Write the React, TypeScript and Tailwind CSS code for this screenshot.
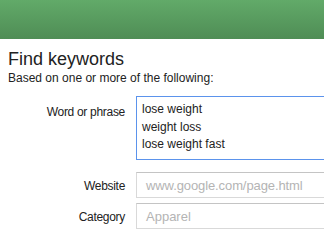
const labelCls =
  "text-right text-[12px] leading-[15px] tracking-[-0.3px] text-[#222]";

export default function App() {
  return (
    <div
      className="w-[324px] h-[241px] overflow-hidden bg-white"
      style={{ fontFamily: '"Liberation Sans", Arial, sans-serif' }}
    >
      {/* Green header band */}
      <div className="h-[39px] bg-gradient-to-b from-[#62aa69] to-[#4f8d55]" />

      <div className="pl-[8px]">
        <h1 className="mt-[9px] text-[18px] leading-[22px] text-[#222]">Find keywords</h1>
        <p className="mt-[1px] text-[12px] leading-[15px] text-[#222]">
          Based on one or more of the following:
        </p>
      </div>

      <div className="mt-[10px] flex flex-col">
        {/* Word or phrase */}
        <div className="flex gap-[11px]">
          <div className={`w-[125px] shrink-0 pt-[9px] ${labelCls}`}>Word or phrase</div>
          <div className="w-[240px] shrink-0 h-[64px] border border-[#5b93ec] pl-[5px] pt-[4px] text-[12px] leading-[17.5px] text-[#222]">
            <div>lose weight</div>
            <div>weight loss</div>
            <div>lose weight fast</div>
          </div>
        </div>

        {/* Website */}
        <div className="mt-[12px] flex items-center gap-[11px]">
          <div className={`w-[125px] shrink-0 pt-[2px] ${labelCls}`}>Website</div>
          <div className="w-[240px] shrink-0 h-[26px] flex items-center border border-[#d9d9d9] border-t-[#c4c4c4] pl-[9px] text-[13px] leading-[15px] text-[#b4b4b4] tracking-[-0.1px]">
            www.google.com/page.html
          </div>
        </div>

        {/* Category */}
        <div className="mt-[5px] flex items-center gap-[11px]">
          <div className={`w-[125px] shrink-0 pt-[2px] ${labelCls}`}>Category</div>
          <div className="w-[240px] shrink-0 h-[26px] flex items-center border border-[#d9d9d9] border-t-[#c4c4c4] pl-[9px] text-[13px] leading-[15px] text-[#b4b4b4]">
            Apparel
          </div>
        </div>
      </div>
    </div>
  );
}
